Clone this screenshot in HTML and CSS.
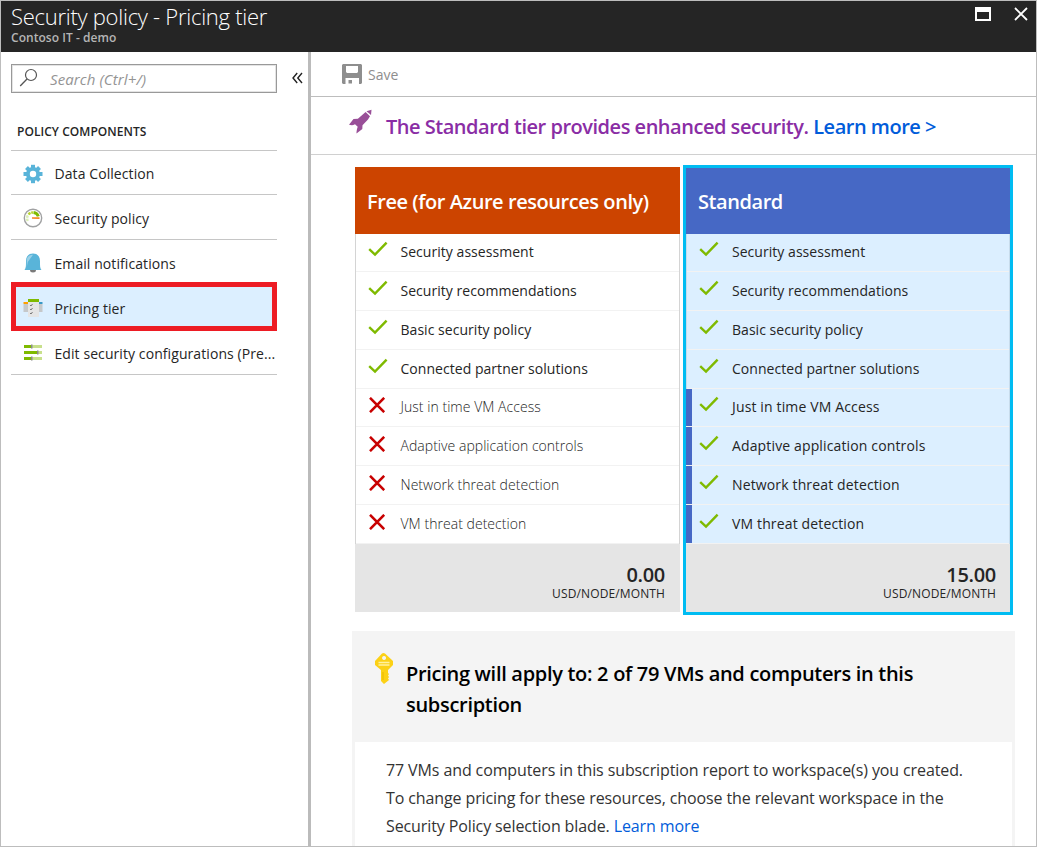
FILE: index.html
```html
<!DOCTYPE html>
<html lang="en">
<head>
<meta charset="utf-8">
<title>Security policy - Pricing tier</title>
<link rel="stylesheet" href="styles.css">
</head>
<body>
<svg class="defs" width="0" height="0" aria-hidden="true">
  <symbol id="check" viewBox="0 0 20 16"><path d="M1.2 8.2 7 13.6 18.6 1.6" fill="none" stroke="#7fba00" stroke-width="2.4"/></symbol>
  <symbol id="cross" viewBox="0 0 20 16"><path d="M2 .8 16.2 15.200M16.200 .8 2 15.200" fill="none" stroke="#c80000" stroke-width="2.5"/></symbol>
</svg>
<div class="blade">
  <header class="header">
    <div>
      <h1 class="title">Security policy - Pricing tier</h1>
      <div class="subtitle">Contoso IT - demo</div>
    </div>
    <div class="window-actions">
      <svg width="17" height="15" viewBox="0 0 17 15"><path fill="#fff" fill-rule="evenodd" d="M0 0h16v14H0zM2 5v7h12V5z"/></svg>
      <svg width="14" height="14" viewBox="0 0 14 14"><path d="M1 1l12 12M13 1 1 13" stroke="#fff" stroke-width="1.8"/></svg>
    </div>
  </header>
  <div class="body">
    <nav class="sidebar">
      <div class="search-row">
        <div class="search">
          <svg width="20" height="20" viewBox="0 0 20 20"><circle cx="12" cy="7" r="5.500" fill="none" stroke="#555" stroke-width="1.200"/><path d="M8 11 1.200 18" stroke="#555" stroke-width="1.300"/></svg>
          <span>Search (Ctrl+/)</span>
        </div>
        <svg class="collapse" width="11" height="12" viewBox="0 0 11 12"><path d="M5.200 1 1 6l4.200 5M10 1 5.800 6 10 11" fill="none" stroke="#222" stroke-width="1.400"/></svg>
      </div>
      <h2 class="section">POLICY COMPONENTS</h2>
      <ul class="menu">
        <li class="item first">
          <svg width="20" height="20" viewBox="0 0 20 20"><g fill="#59b4d9"><rect x="8" y=".8" width="4" height="18.400"/><rect x="8" y=".8" width="4" height="18.400" transform="rotate(45 10 10)"/><rect x="8" y=".5" width="4" height="19" transform="rotate(90 10 10)"/><rect x="8" y=".8" width="4" height="18.400" transform="rotate(135 10 10)"/><circle cx="10" cy="10" r="7"/></g><circle cx="10" cy="10" r="3.200" fill="#fff"/></svg>
          <span>Data Collection</span>
        </li>
        <li class="item">
          <svg width="20" height="20" viewBox="0 0 20 20"><circle cx="10" cy="10" r="8.700" fill="#fff" stroke="#a0a1a2" stroke-width="1.400"/><path d="M4.800 13A6 6 0 0 1 5 7" fill="none" stroke="#dceeb8" stroke-width="2.500" stroke-dasharray="2.500 .7"/><path d="M5.500 6.500A6 6 0 0 1 10 4.400" fill="none" stroke="#b8d432" stroke-width="2.500" stroke-dasharray="2.500 .7"/><path d="M10.500 4.500A5.600 5.600 0 0 1 15.300 8.400" fill="none" stroke="#7fba00" stroke-width="3"/><path d="M9 9.200l7.500.1v1.800L9 10.800z" fill="#f5821f"/></svg>
          <span>Security policy</span>
        </li>
        <li class="item">
          <svg width="20" height="20" viewBox="0 0 20 20"><path d="M7 17h6a3 2.500 0 0 1-6 0" fill="#7a7a7a"/><path d="M1.500 17C3 15 3 13 3 8c0-5 3-7.500 7-7.500s7 2.500 7 7.500c0 5 0 7 1.500 9z" fill="#59b4d9"/><path d="M3.800 14V8c0-4 2.200-6 6.200-6.200L4.800 9z" fill="#9bd1e8"/></svg>
          <span>Email notifications</span>
        </li>
        <li class="item selected">
          <svg width="20" height="20" viewBox="0 0 20 20"><path d="M.5 6H6v8H.5zM14 6h5.500v8H14z" fill="#c5c8ca"/><path d="M.5 4H6v2H.5z" fill="#ff9f00"/><path d="M14 4h5.500v2H14z" fill="#3999c6"/><path d="M5 3h11v16H5z" fill="#e5e5e5"/><path d="M5 1h11v3H5z" fill="#7fba00"/><path d="M7 7l1 1 1.500-2M7 11l1 1 1.500-2M7 15l1 1 1.500-2" fill="none" stroke="#777"/></svg>
          <span>Pricing tier</span>
        </li>
        <li class="item">
          <svg width="20" height="20" viewBox="0 0 20 20"><path d="M1 2h8v3H1zM1 8h13v3H1zM1 14h8v3H1z" fill="#7fba00"/><path d="M9 2h10v3H9zM14 8h5v3h-5zM9 14h10v3H9z" fill="#c8e08c"/><path d="M8 1.500h1.500v4H8zM14 7.500h1.500v4H14zM8 13.500h1.500v4H8z" fill="#8c8c8c"/></svg>
          <span>Edit security configurations (Pre...</span>
        </li>
      </ul>
    </nav>
    <main class="content">
      <div class="toolbar">
        <svg width="20" height="20" viewBox="0 0 20 20"><path fill="#8e8e8e" fill-rule="evenodd" d="M1 0h18l1 1v18l-1 1h-2v-6H3.500v6H1l-1-1V1zM4 2v6l1 1h10l1-1V2z"/><path fill="#8e8e8e" d="M6.500 16H10v3.500H6.500z"/></svg>
        <span>Save</span>
      </div>
      <div class="banner">
        <svg width="25" height="25" viewBox="0 0 25 25"><g fill="#994f98"><path d="M23.500.8 23 6 18.500 2.200z"/><path d="M17.600 3 22 7.200l-2 3.200-5.500 5.800-.2 3.700L8.500 24.500V20l-1-3-6.500-1.200L5.500 10l4.400-.3z"/></g><path d="m2 17.500 5-2.300 2.700 2.600L8 23l-3-.5-3-2z" fill="#fff"/></svg>
        <p>The Standard tier provides enhanced security. <a>Learn more &gt;</a></p>
      </div>
      <section class="tiers">
        <article class="tier free">
          <h2 class="tier-head">Free (for Azure resources only)</h2>
          <ul class="features">
            <li><svg><use href="#check"/></svg><span>Security assessment</span></li>
            <li><svg><use href="#check"/></svg><span>Security recommendations</span></li>
            <li><svg><use href="#check"/></svg><span>Basic security policy</span></li>
            <li><svg><use href="#check"/></svg><span>Connected partner solutions</span></li>
            <li class="off"><svg><use href="#cross"/></svg><span>Just in time VM Access</span></li>
            <li class="off"><svg><use href="#cross"/></svg><span>Adaptive application controls</span></li>
            <li class="off"><svg><use href="#cross"/></svg><span>Network threat detection</span></li>
            <li class="off"><svg><use href="#cross"/></svg><span>VM threat detection</span></li>
          </ul>
          <footer class="price"><strong>0.00</strong><span>USD/NODE/MONTH</span></footer>
        </article>
        <article class="tier standard">
          <h2 class="tier-head">Standard</h2>
          <ul class="features">
            <li><svg><use href="#check"/></svg><span>Security assessment</span></li>
            <li><svg><use href="#check"/></svg><span>Security recommendations</span></li>
            <li><svg><use href="#check"/></svg><span>Basic security policy</span></li>
            <li><svg><use href="#check"/></svg><span>Connected partner solutions</span></li>
            <li class="extra"><svg><use href="#check"/></svg><span>Just in time VM Access</span></li>
            <li class="extra"><svg><use href="#check"/></svg><span>Adaptive application controls</span></li>
            <li class="extra"><svg><use href="#check"/></svg><span>Network threat detection</span></li>
            <li class="extra"><svg><use href="#check"/></svg><span>VM threat detection</span></li>
          </ul>
          <footer class="price"><strong>15.00</strong><span>USD/NODE/MONTH</span></footer>
        </article>
      </section>
      <section class="scope">
        <div class="scope-head">
          <svg width="20" height="31" viewBox="0 0 20 31"><path fill="#fcd116" fill-rule="evenodd" d="M9.500 0 11 .5 19 8v4l-5 5v3l1 1-1 1.500 1 1.500-1 1.500 1 1.500L10 31l-3-3V17l-6-5V8L8 .5zM10 3a2 2 0 1 0 .1 0z"/><path d="M4.500 9.500h11M4.500 12h11" stroke="#fff1a0" stroke-width="1.300"/><path d="M9 19v8" stroke="#e8b800"/></svg>
          <h3>Pricing will apply to: 2 of 79 VMs and computers in this<br>subscription</h3>
        </div>
        <p class="scope-body">77 VMs and computers in this subscription report to workspace(s) you created.<br>To change pricing for these resources, choose the relevant workspace in the<br>Security Policy selection blade. <a>Learn more</a></p>
      </section>
    </main>
  </div>
</div>
</body>
</html>
```
FILE: styles.css
```css
* { box-sizing: border-box; }
body {
  margin: 0;
  font-family: "Open Sans", "Noto Sans", sans-serif;
  font-size: 14px;
  color: #252525;
  background: #fff;
}
h1, h2, h3, p, ul { margin: 0; padding: 0; font-weight: 400; }
ul { list-style: none; }
svg { flex: none; display: block; }
span, p, h3 { white-space: nowrap; }
a { color: #015cda; }
.defs { display: none; }

.blade {
  width: 1037px;
  height: 847px;
  border: 1px solid #bdbdbd;
  display: flex;
  flex-direction: column;
  overflow: hidden;
}
.header {
  height: 51px;
  flex: none;
  background: #252525;
  color: #fff;
  display: flex;
  justify-content: space-between;
  padding: 0 8px 0 10px;
}
.title { font-size: 22px; line-height: 30px; font-weight: 300; letter-spacing: -.27px; }
.subtitle { font-size: 12px; line-height: 14px; color: #b5b5b5; font-weight: 600; letter-spacing: .05px; }
.window-actions { display: flex; gap: 22px; padding-top: 6px; }
.body { flex: 1; min-height: 0; display: flex; }

.sidebar { width: 310px; flex: none; border-right: 3px solid #bbb; padding: 12px 0 0 10px; }
.search-row { display: flex; align-items: center; gap: 15px; }
.search {
  width: 266px;
  height: 29px;
  border: 1px solid #999;
  box-shadow: inset 0 0 0 1px #e4e4e4;
  display: flex;
  align-items: center;
  gap: 11px;
  padding-left: 7px;
  color: #949494;
  font-size: 15px;
  font-style: italic;
  letter-spacing: .1px;
}
.search svg { margin-top: -2px; }
.collapse { margin-top: -2px; }
.section { padding: 29px 0 0 6px; height: 57px; font-size: 12px; line-height: 20px; font-weight: 600; letter-spacing: .05px; }
.menu { width: 266px; }
.item { height: 45px; display: flex; align-items: center; gap: 12px; padding: 2px 0 0 11.5px; border-bottom: 1px solid #c6c6c6; letter-spacing: .08px; }
.item.first { border-top: 1px solid #c6c6c6; }
.item.selected {
  height: 49px;
  margin: -3px 0 -1px;
  border: 5px solid #ed1c24;
  background: #dcefff;
  padding: 3px 0 0 6.5px;
}

.content { flex: 1; min-width: 0; }
.toolbar { height: 45px; display: flex; align-items: center; gap: 6px; padding-left: 31px; border-bottom: 1px solid #bdbdbd; color: #8e8e8e; }
.banner { height: 58px; display: flex; gap: 13px; padding: 12px 0 0 37px; border-bottom: 1px solid #d0d0d0; }
.banner p { font-size: 20px; line-height: 34px; margin-top: 1px; font-weight: 600; color: #8a2da5; letter-spacing: -.48px; }

.tiers { display: flex; gap: 3px; padding: 10px 0 0 44px; }
.tier.free { width: 325px; margin-top: 2px; }
.tier.standard { width: 330px; height: 450px; border: 3px solid #00bcf2; background: #dcefff; }
.tier-head { height: 67px; line-height: 70px; padding-left: 12px; font-size: 20px; font-weight: 600; color: #fff; background: #cc4400; letter-spacing: -.44px; }
.standard .tier-head { height: 66px; line-height: 68px; background: #4668c5; }
.features { display: grid; grid-template-rows: 38px 39px 39px 39px 38px 39px 39px 39px; letter-spacing: .04px; }
.features li { display: flex; align-items: center; gap: 13px; padding: 0 0 3px 11.5px; border: 1px solid #d4d4d4; border-width: 0 1px; box-shadow: inset 0 -1px #f2f2f2; }
.features svg { width: 20px; height: 16px; margin-top: -5px; }
.features .off { font-weight: 300; }
.features .off svg { margin-top: -3px; }
.standard .features li { border-color: #c8dcec; padding-left: 12px; }
.standard .features .extra {
  border-left: 0;
  padding-left: 13px;
  background: linear-gradient(to right, #4668c5 6px, transparent 6px);
  letter-spacing: .14px;
}
.price { height: 68px; background: #e5e5e5; display: flex; flex-direction: column; align-items: flex-end; padding: 17px 15px 0 0; }
.standard .price { padding-right: 14px; }
.price strong { font-size: 20px; line-height: 28px; font-weight: 600; letter-spacing: -.3px; }
.price span { font-size: 12px; line-height: 17px; margin-top: -5px; letter-spacing: .12px; }
.price span { margin-top: -4px; }

.scope { width: 663px; height: 216px; margin: 16px 0 0 41px; border: 3px solid #f4f4f4; border-width: 0 3px; }
.scope-head { height: 111px; background: #f4f4f4; display: flex; gap: 12px; padding: 22px 0 0 19px; color: #000; }
.scope-head h3 { font-size: 20px; line-height: 31px; margin-top: 5px; font-weight: 600; letter-spacing: -.3px; }
.scope-body { padding: 14px 0 0 31px; font-size: 16px; line-height: 28px; color: #333; letter-spacing: -.11px; }
```
